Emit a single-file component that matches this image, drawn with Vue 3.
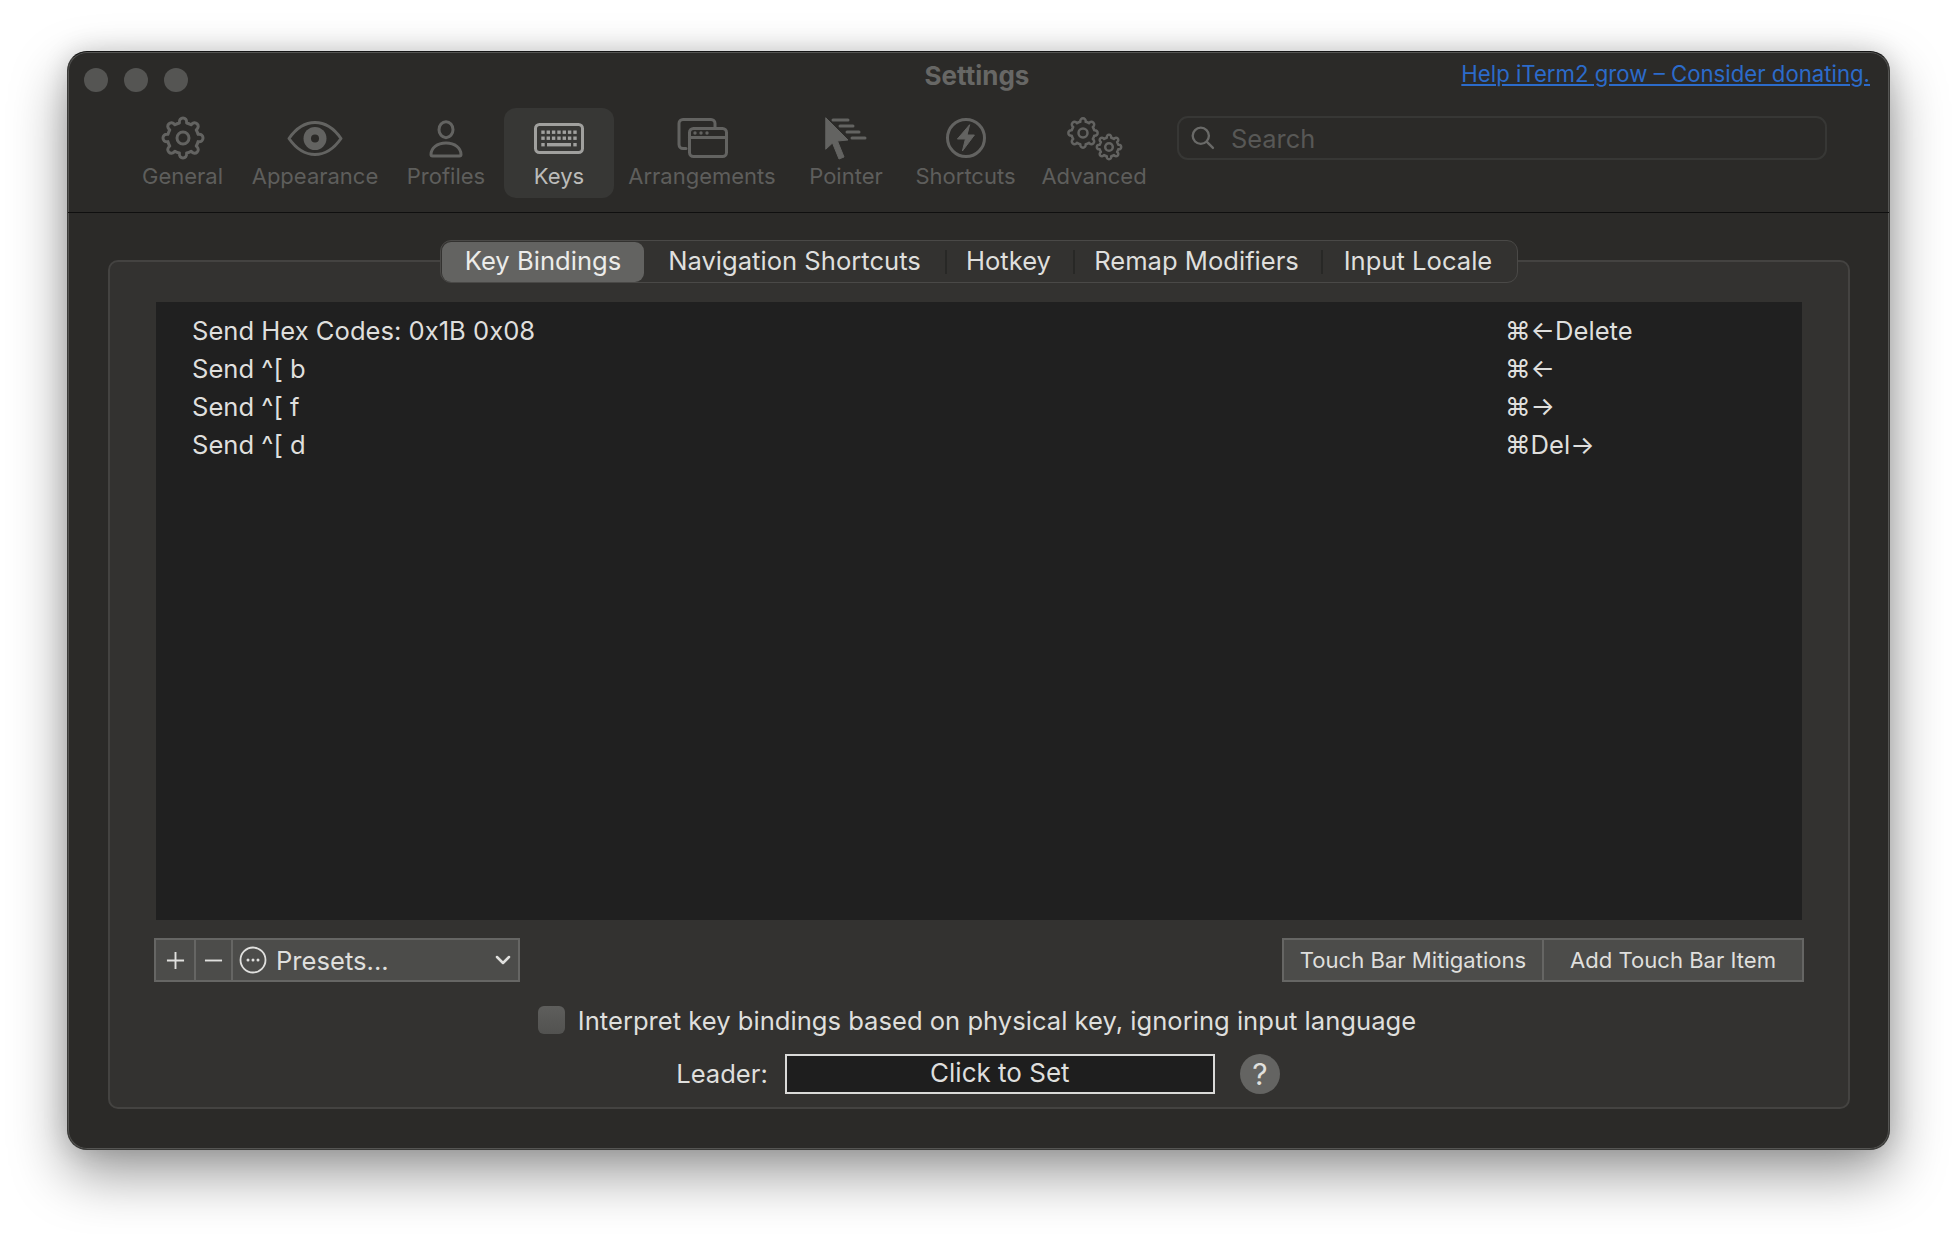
<script setup>
function gearPath(cx, cy, R, r, n) {
  const step = (Math.PI * 2) / n
  const ctrl = r + (R - r) * 1.33
  const pt = (rad, a) => `${(cx + rad * Math.cos(a)).toFixed(2)} ${(cy + rad * Math.sin(a)).toFixed(2)}`
  let d = ''
  for (let i = 0; i < n; i++) {
    const a = i * step - Math.PI / 2
    const s = a - step * 0.3
    const e = a + step * 0.3
    d += i === 0 ? `M${pt(r, s)} ` : `A${r} ${r} 0 0 1 ${pt(r, s)} `
    d += `C${pt(ctrl, a - step * 0.27)} ${pt(ctrl, a + step * 0.27)} ${pt(r, e)} `
  }
  return d + `A${r} ${r} 0 0 1 ${pt(r, -Math.PI / 2 - step * 0.3)}Z`
}
const gearMain = gearPath(30, 22, 20.5, 15.5, 8)
const gearA = gearPath(19, 17, 15, 11.5, 8)
const gearB = gearPath(45, 31, 12.5, 9.5, 8)
const keyCols = [14, 19.3, 24.6, 30, 35.3, 40.6, 46]
const rows = [
  { action: 'Send Hex Codes: 0x1B 0x08', keys: '⌘←Delete' },
  { action: 'Send ^[ b', keys: '⌘←' },
  { action: 'Send ^[ f', keys: '⌘→' },
  { action: 'Send ^[ d', keys: '⌘Del→' },
]
</script>

<template>
  <div class="page">
    <div class="window">
      <header class="header">
        <div class="titlebar">
          <div class="lights"><i></i><i></i><i></i></div>
          <div class="title">Settings</div>
          <a class="donate">Help iTerm2 grow – Consider donating.</a>
        </div>
        <div class="toolbar">
          <div class="tool w-general">
            <svg viewBox="0 0 60 46" class="ic"><path :d="gearMain" fill="none" /><circle cx="30" cy="22" r="6" fill="none" /></svg>
            <span>General</span>
          </div>
          <div class="tool w-appearance">
            <svg viewBox="0 0 60 46" class="ic">
              <path d="M4 22.5C12 11 22 6.5 30 6.5S48 11 56 22.5C48 34 38 38.5 30 38.5S12 34 4 22.5Z" fill="none" />
              <circle cx="30" cy="22.5" r="11.5" class="solid" />
              <circle cx="30" cy="22.5" r="4" class="hole" />
            </svg>
            <span>Appearance</span>
          </div>
          <div class="tool w-profiles">
            <svg viewBox="0 0 60 46" class="ic">
              <ellipse cx="30" cy="13.7" rx="7" ry="8" fill="none" />
              <path d="M15 38.5C15 32 21 27 30 27S45 32 45 38.5Q45 40 43.500 40H16.500Q15 40 15 38.5Z" fill="none" />
            </svg>
            <span>Profiles</span>
          </div>
          <div class="tool w-keys active">
            <svg viewBox="0 0 60 46" class="ic">
              <rect x="6.5" y="8.5" width="47" height="28" rx="4" fill="none" />
              <g class="solid">
                <rect v-for="x in keyCols" :key="'a' + x" :x="x - 1.7" y="14.5" width="3.4" height="3.4" />
                <rect v-for="x in keyCols" :key="'b' + x" :x="x - 1.7" y="20.5" width="3.4" height="3.4" />
                <rect x="12.3" y="27" width="3.4" height="3.4" />
                <rect x="18" y="27" width="24" height="3.4" />
                <rect x="44.3" y="27" width="3.4" height="3.4" />
              </g>
            </svg>
            <span>Keys</span>
          </div>
          <div class="tool w-arrangements">
            <svg viewBox="0 0 60 46" class="ic">
              <path d="M14 32.500H11A4 4 0 0 1 7 28.500V7.500A4 4 0 0 1 11 3.500H39A4 4 0 0 1 43 7.500V11" fill="none" />
              <rect x="17.500" y="12.500" width="37" height="28" rx="4" fill="none" />
              <path d="M17.500 21.500H54.500" fill="none" />
              <g class="solid"><circle cx="23" cy="17" r="1.700" /><circle cx="29" cy="17" r="1.700" /><circle cx="35" cy="17" r="1.700" /></g>
            </svg>
            <span>Arrangements</span>
          </div>
          <div class="tool w-pointer">
            <svg viewBox="0 0 60 46" class="ic">
              <path class="solid flat" d="M10 2L32 24L21.500 25L28 41L23 43L16.500 27L10 33Z" />
              <path d="M17 4H32M24 10H37M31 16H43M36 22H49" fill="none" />
            </svg>
            <span>Pointer</span>
          </div>
          <div class="tool w-shortcuts">
            <svg viewBox="0 0 60 46" class="ic">
              <circle cx="30" cy="22" r="18.500" fill="none" />
              <path class="solid flat" d="M33.400 9L21.400 23H29.400L26.400 35L38.400 19H31.400Z" />
            </svg>
            <span>Shortcuts</span>
          </div>
          <div class="tool w-advanced">
            <svg viewBox="0 0 60 46" class="ic thin">
              <path :d="gearA" fill="none" /><circle cx="19" cy="17" r="4.500" fill="none" />
              <path :d="gearB" fill="none" /><circle cx="45" cy="31" r="3.800" fill="none" />
            </svg>
            <span>Advanced</span>
          </div>
          <div class="search">
            <svg viewBox="0 0 30 30" class="search-ic">
              <circle cx="12" cy="12" r="9" fill="none" /><path d="M18.500 18.500L25.500 25.500" fill="none" />
            </svg>
            <span>Search</span>
          </div>
        </div>
      </header>

      <main class="content">
        <section class="group">
          <nav class="tabs">
            <div class="tab t-keys selected">Key Bindings</div>
            <div class="tab t-nav">Navigation Shortcuts</div>
            <div class="tab t-hot sep">Hotkey</div>
            <div class="tab t-remap sep">Remap Modifiers</div>
            <div class="tab t-input sep">Input Locale</div>
          </nav>

          <div class="table">
            <div v-for="r in rows" :key="r.action" class="row">
              <span>{{ r.action }}</span>
              <span>{{ r.keys }}</span>
            </div>
          </div>

          <div class="controls">
            <div class="btns">
              <div class="btn b-add">
                <svg viewBox="0 0 20 20" class="glyph"><path d="M10 1V19M1 10H19" /></svg>
              </div>
              <div class="btn b-rem">
                <svg viewBox="0 0 20 20" class="glyph"><path d="M1 10H19" /></svg>
              </div>
              <div class="btn b-presets">
                <svg viewBox="0 0 28 28" class="more">
                  <circle cx="14" cy="14" r="12.500" fill="none" />
                  <circle cx="9" cy="14" r="1.500" class="dot" /><circle cx="14" cy="14" r="1.500" class="dot" /><circle cx="19" cy="14" r="1.500" class="dot" />
                </svg>
                <span class="presets-label">Presets...</span>
                <svg viewBox="0 0 16 10" class="chev"><path d="M2 2L8 8L14 2" fill="none" /></svg>
              </div>
            </div>
            <div class="btns small">
              <div class="btn b-mit">Touch Bar Mitigations</div>
              <div class="btn b-item">Add Touch Bar Item</div>
            </div>
          </div>

          <div class="check-row">
            <div class="checkbox"></div>
            <span>Interpret key bindings based on physical key, ignoring input language</span>
          </div>

          <div class="leader-row">
            <span class="leader-label">Leader:</span>
            <div class="leader-field">Click to Set</div>
            <div class="help">?</div>
          </div>
        </section>
      </main>
    </div>
  </div>
</template>

<style>
html, body { margin: 0; background: #fff; }
</style>

<style scoped>
.page {
  box-sizing: border-box;
  height: 1234px;
  padding: 51px 0 0 67px;
  background: #fff;
  overflow: hidden;
}
.window {
  box-sizing: border-box;
  width: 1823px;
  height: 1099px;
  background: #2b2a28;
  border: 1px solid #3a3a38;
  border-top-color: #141414;
  border-radius: 20px;
  box-shadow: inset 0 0 0 1px #555553, 0 24px 56px rgba(0, 0, 0, 0.4), 0 0 26px rgba(0, 0, 0, 0.14);
  font-family: Inter, "Noto Sans", "DejaVu Sans", sans-serif;
  font-size: 25.6px;
  color: #dfdfdd;
  display: flex;
  flex-direction: column;
  overflow: hidden;
}
.header {
  box-sizing: border-box;
  height: 161px;
  border-bottom: 1px solid #0f0f0f;
  flex: none;
}
.titlebar {
  display: grid;
  grid-template-columns: 1fr auto 1fr;
  align-items: center;
  height: 46px;
  padding: 0 19px 0 16px;
}
.lights { display: flex; gap: 16px; margin-top: 10px; }
.lights i { width: 24px; height: 24px; border-radius: 50%; background: #555553; display: block; }
.title { font-weight: 700; font-size: 26px; color: #676765; margin-top: 1px; }
.donate {
  justify-self: end;
  color: #2c6bca;
  text-decoration: underline;
  font-size: 22.2px;
  margin-top: -3px;
  white-space: nowrap;
}
.toolbar {
  display: flex;
  align-items: flex-start;
  padding: 10px 0 0 55px;
}
.tool {
  box-sizing: border-box;
  height: 90px;
  padding-top: 8px;
  border-radius: 12px;
  display: flex;
  flex-direction: column;
  align-items: center;
  color: #5e5e5c;
  font-size: 22px;
  line-height: 26px;
  flex: none;
  white-space: nowrap;
}
.w-general { width: 119px; }
.w-appearance { width: 146px; }
.w-profiles { width: 116px; }
.w-keys { width: 110px; }
.w-arrangements { width: 176px; }
.w-pointer { width: 112px; }
.w-shortcuts { width: 127px; }
.w-advanced { width: 130px; }
.tool.active { background: #373735; color: #bcbcba; }
.ic { width: 60px; height: 46px; display: block; margin-bottom: 1px; stroke: #636361; stroke-width: 3; stroke-linejoin: round; stroke-linecap: round; overflow: visible; }
.ic.thin { stroke-width: 2.5; }
.ic .solid { fill: #636361; stroke: none; }
.ic .solid.flat { stroke: #636361; stroke-width: 1; }
.ic .hole { fill: #2b2a28; stroke: none; }
.active .ic { stroke: #a0a09e; }
.active .ic .solid { fill: #a0a09e; }
.search {
  box-sizing: border-box;
  width: 650px;
  height: 44px;
  margin: 8px 0 0 18px;
  border: 2px solid #373735;
  border-radius: 11px;
  display: flex;
  align-items: center;
  color: #585856;
  font-size: 25.4px;
  padding: 1px 0 0 11px;
}
.search-ic { width: 27px; height: 27px; margin-right: 14px; stroke: #6a6a68; stroke-width: 2.6; stroke-linecap: round; }
.content {
  flex: 1;
  display: flex;
  padding: 47px 39px 40px 40px;
  min-height: 0;
}
.group {
  box-sizing: border-box;
  flex: 1;
  background: #333230;
  border: 2px solid #444341;
  border-radius: 10px;
  display: flex;
  flex-direction: column;
  padding: 0 46px 14px 46px;
}
.tabs {
  box-sizing: border-box;
  align-self: center;
  display: flex;
  height: 43px;
  margin-top: -22px;
  padding: 1px;
  background: #333230;
  border: 1px solid #4a4947;
  border-radius: 11px;
  flex: none;
}
.tab {
  box-sizing: border-box;
  display: flex;
  align-items: center;
  justify-content: center;
  height: 40px;
  padding-bottom: 3px;
  white-space: nowrap;
}
.t-keys { width: 202px; }
.t-nav { width: 301px; }
.t-hot { width: 128px; }
.t-remap { width: 248px; }
.t-input { width: 195px; }
.tab.selected { background: #636361; border-radius: 9px; color: #ececea; }
.tab.sep { border-left: 2px solid transparent; padding-right: 3px; background: linear-gradient(#282826, #282826) left center / 2px 24px no-repeat border-box; }
.table {
  box-sizing: border-box;
  height: 618px;
  margin-top: 19px;
  background: #202020;
  padding: 10px 0 0 36px;
  flex: none;
}
.row { display: grid; grid-template-columns: 1313px 1fr; height: 38px; align-items: center; line-height: 38px; }
.controls {
  display: flex;
  justify-content: space-between;
  margin: 18px -2px 0;
  flex: none;
}
.btns { display: flex; height: 44px; }
.btn {
  box-sizing: border-box;
  height: 44px;
  background: #4c4c4a;
  border: 2px solid #666664;
  margin-left: -2px;
  display: flex;
  align-items: center;
  justify-content: center;
  white-space: nowrap;
}
.btns .btn:first-child { margin-left: 0; }
.b-add { width: 42px; }
.b-rem { width: 39px; }
.b-presets { width: 289px; justify-content: flex-start; padding-left: 6px; }
.glyph { width: 19px; height: 19px; stroke: #e0e0de; stroke-width: 2; }
.more { width: 28px; height: 28px; stroke: #e0e0de; stroke-width: 1.8; flex: none; }
.more .dot { fill: #e0e0de; stroke: none; }
.presets-label { margin-left: 9px; flex: 1; font-size: 25.6px; }
.chev { width: 16px; height: 10px; margin-right: 7px; stroke: #e0e0de; stroke-width: 2.5; stroke-linecap: round; stroke-linejoin: round; flex: none; }
.small { font-size: 22.1px; }
.b-mit { width: 262px; }
.b-item { width: 262px; }
.check-row {
  display: flex;
  align-items: center;
  justify-content: center;
  height: 28px;
  margin-top: 24px;
  padding-right: 4px;
  flex: none;
}
.checkbox {
  box-sizing: border-box;
  width: 27px;
  height: 28px;
  margin-right: 13px;
  border-radius: 6px;
  background: linear-gradient(#5e5e5c, #525250);
  flex: none;
}
.leader-row {
  display: flex;
  align-items: center;
  justify-content: center;
  height: 41px;
  margin-top: 19px;
  padding-right: 2px;
  flex: none;
}
.leader-label { margin-right: 17px; }
.leader-field {
  box-sizing: border-box;
  width: 430px;
  height: 40px;
  background: #1e1e1e;
  border: 2px solid #dadad8;
  padding-bottom: 2px;
  font-size: 26px;
  display: flex;
  align-items: center;
  justify-content: center;
}
.help {
  width: 40px;
  height: 40px;
  margin-left: 25px;
  border-radius: 50%;
  background: #646462;
  color: #e0e0de;
  font-size: 30px;
  display: flex;
  align-items: center;
  justify-content: center;
}
</style>
